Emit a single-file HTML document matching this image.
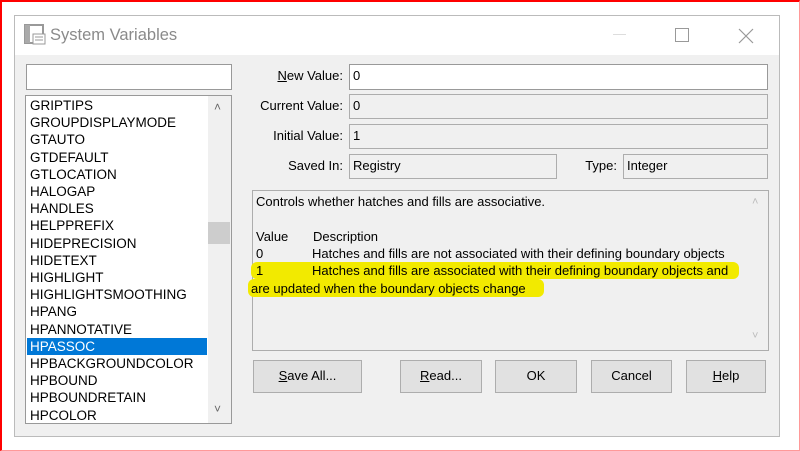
<!DOCTYPE html>
<html><head><style>
*{box-sizing:border-box;margin:0;padding:0}
body{width:800px;height:451px;background:#fff;position:relative;overflow:hidden;font-family:"Liberation Sans",sans-serif;font-size:13px;color:#000}
.abs{position:absolute}
.frame{left:0;top:0;width:800px;height:451px;border:1px solid #f00;border-right-color:#f99;border-bottom-color:#f99;border-top-width:2px;border-left-width:2px}
.dlg{left:14px;top:15px;width:766px;height:422px;border:1px solid #bbb;background:#f0f0f0}
.tb{left:15px;top:16px;width:764px;height:39px;background:#fff}
.inp{border:1px solid #adadad;background:#f0f0f0;padding:2px 3px;font-size:13px;line-height:18px}
.lbl{text-align:right;width:120px;font-size:13px}
.btn{border:1px solid #adadad;background:#e1e1e1;text-align:center;line-height:30px;font-size:13px;height:33px}
.li{left:30px;font-size:13.5px;line-height:17.2px}
</style></head><body>
<div class="abs frame"></div>
<div class="abs dlg"></div>
<div class="abs tb"></div>
<svg class="abs" style="left:24px;top:24px" width="22" height="22"><rect x="1" y="1" width="18" height="18" fill="none" stroke="#999" stroke-width="2"/><rect x="1" y="1" width="5" height="18" fill="#aaa"/><rect x="9" y="10" width="12" height="10" fill="#fff" stroke="#999"/><line x1="11" y1="13" x2="19" y2="13" stroke="#999"/><line x1="11" y1="16" x2="19" y2="16" stroke="#999"/></svg>
<div class="abs" style="left:50px;top:26px;font-size:16.5px;color:#8a8a8a">System Variables</div>
<div class="abs" style="left:613px;top:34px;width:13px;height:1px;background:#ddd"></div>
<div class="abs" style="left:675px;top:28px;width:14px;height:14px;border:1px solid #999"></div>
<svg class="abs" style="left:738px;top:28px" width="16" height="16"><path d="M1 1L15 15M15 1L1 15" stroke="#999" stroke-width="1.2"/></svg>
<div class="abs" style="left:26px;top:64px;width:206px;height:26px;border:1px solid #999;background:#fff"></div>
<div class="abs" style="left:25px;top:95px;width:207px;height:329px;border:1px solid #999;background:#fff"></div>
<div class="abs" style="left:208px;top:96px;width:23px;height:327px;background:#f0f0f0"></div>
<div class="abs" style="left:208px;top:222px;width:22px;height:22px;background:#cdcdcd"></div>
<div class="abs" style="left:214px;top:100px;color:#666;font-size:12px">&#x2C4;</div>
<div class="abs" style="left:214px;top:402px;color:#666;font-size:12px">&#x2C5;</div>
<div class="abs" style="left:27px;top:338px;width:180px;height:17px;background:#0078d7"></div>
<div class="abs li" style="top:97px">GRIPTIPS<br>GROUPDISPLAYMODE<br>GTAUTO<br>GTDEFAULT<br>GTLOCATION<br>HALOGAP<br>HANDLES<br>HELPPREFIX<br>HIDEPRECISION<br>HIDETEXT<br>HIGHLIGHT<br>HIGHLIGHTSMOOTHING<br>HPANG<br>HPANNOTATIVE<br><span style="color:#fff">HPASSOC</span><br>HPBACKGROUNDCOLOR<br>HPBOUND<br>HPBOUNDRETAIN<br>HPCOLOR</div>
<div class="abs lbl" style="left:223px;top:68px"><u>N</u>ew Value:</div>
<div class="abs lbl" style="left:223px;top:98px">Current Value:</div>
<div class="abs lbl" style="left:223px;top:128px">Initial Value:</div>
<div class="abs lbl" style="left:223px;top:158px">Saved In:</div>
<div class="abs lbl" style="left:497px;top:158px">Type:</div>
<div class="abs inp" style="left:349px;top:64px;width:419px;height:26px;background:#fff;border-color:#999">0</div>
<div class="abs inp" style="left:349px;top:94px;width:419px;height:25px">0</div>
<div class="abs inp" style="left:349px;top:124px;width:419px;height:25px">1</div>
<div class="abs inp" style="left:349px;top:154px;width:208px;height:25px">Registry</div>
<div class="abs inp" style="left:623px;top:154px;width:145px;height:25px">Integer</div>
<div class="abs" style="left:252px;top:190px;width:517px;height:161px;border:1px solid #adadad"></div>
<div class="abs" style="left:752px;top:196px;color:#bbb;font-size:11px">&#x2C4;</div>
<div class="abs" style="left:752px;top:330px;color:#bbb;font-size:11px">&#x2C5;</div>
<div class="abs" style="left:251px;top:262px;width:488px;height:17px;background:#f2ea00;border-radius:6px"></div>
<div class="abs" style="left:248px;top:279px;width:296px;height:18px;background:#f2ea00;border-radius:6px"></div>
<div class="abs" style="left:256px;top:193px;line-height:17.3px;font-size:13px">Controls whether hatches and fills are associative.<br><br>Value</div>
<div class="abs" style="left:313px;top:227.6px;line-height:17.3px;font-size:13px">Description</div>
<div class="abs" style="left:256px;top:245px;line-height:17.3px;font-size:13px">0<br>1</div>
<div class="abs" style="left:312px;top:245px;line-height:17.3px;font-size:13px">Hatches and fills are not associated with their defining boundary objects<br>Hatches and fills are associated with their defining boundary objects and</div>
<div class="abs" style="left:251px;top:280px;line-height:17px;font-size:13px">are updated when the boundary objects change</div>
<div class="abs btn" style="left:253px;top:360px;width:109px"><u>S</u>ave All...</div>
<div class="abs btn" style="left:400px;top:360px;width:82px"><u>R</u>ead...</div>
<div class="abs btn" style="left:495px;top:360px;width:82px">OK</div>
<div class="abs btn" style="left:591px;top:360px;width:81px">Cancel</div>
<div class="abs btn" style="left:686px;top:360px;width:80px"><u>H</u>elp</div>
</body></html>
